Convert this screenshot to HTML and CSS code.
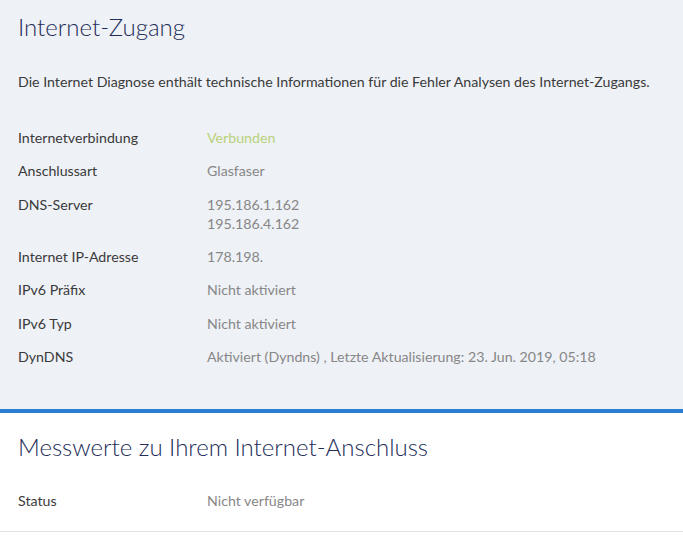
FILE: index.html
```html
<!DOCTYPE html>
<html lang="de">
<head>
  <meta charset="UTF-8">
  <title>Internet-Zugang</title>
  <meta name="viewport" content="width=device-width, initial-scale=1.0">
  <link rel="stylesheet" href="styles.css">
</head>
<body>
  <!-- Bereich: Internet-Zugang -->
  <section class="panel panel-grey">
    <h1>Internet-Zugang</h1>
    <p class="intro">Die Internet Diagnose enthält technische Informationen für die Fehler Analysen des Internet-Zugangs.</p>
    <dl class="info">
      <div class="row"><dt>Internetverbindung</dt><dd class="ok">Verbunden</dd></div>
      <div class="row"><dt>Anschlussart</dt><dd>Glasfaser</dd></div>
      <div class="row"><dt>DNS-Server</dt><dd>195.186.1.162<br>195.186.4.162</dd></div>
      <div class="row"><dt>Internet IP-Adresse</dt><dd>178.198.</dd></div>
      <div class="row"><dt>IPv6 Präfix</dt><dd>Nicht aktiviert</dd></div>
      <div class="row"><dt>IPv6 Typ</dt><dd>Nicht aktiviert</dd></div>
      <div class="row"><dt>DynDNS</dt><dd>Aktiviert (Dyndns) , Letzte Aktualisierung: 23. Jun. 2019, 05:18</dd></div>
    </dl>
  </section>

  <!-- Bereich: Messwerte -->
  <section class="panel panel-white">
    <h1>Messwerte zu Ihrem Internet-Anschluss</h1>
    <dl class="info">
      <div class="row"><dt>Status</dt><dd>Nicht verfügbar</dd></div>
    </dl>
  </section>
</body>
</html>
```

FILE: styles.css
```css
/* Grundlayout */
body {
  margin: 0;
  font-family: Lato, "Open Sans", sans-serif;
  font-size: 14.2px;
  color: #3a3a3a;
  background: #fff;
}
.panel {
  box-sizing: border-box;
  padding: 12px 18px 0;
}
.panel-grey {
  background: #eef1f6;
  height: 413px;
  padding-top: 11px;
  border-bottom: 4px solid #2a7fd3;
}
.panel-white {
  background: #fff;
  height: 119px;
  padding-top: 18px;
  border-bottom: 1px solid #e2e2e2;
}
h1 {
  margin: 0;
  font-size: 24px;
  font-weight: 300;
  line-height: 32px;
  color: #232d58;
}
.intro {
  margin: 29px 0 30px;
  line-height: 19px;
}
.info {
  margin: 0;
}
.row {
  display: flex;
  padding: 7px 0;
  line-height: 19.3px;
}
dt {
  width: 189px;
  flex-shrink: 0;
  color: #3a3a3a;
}
dd {
  margin: 0;
  color: #878787;
}
dd.ok {
  color: #b9d27a;
}
.panel-white .info {
  margin-top: 21px;
}
```
